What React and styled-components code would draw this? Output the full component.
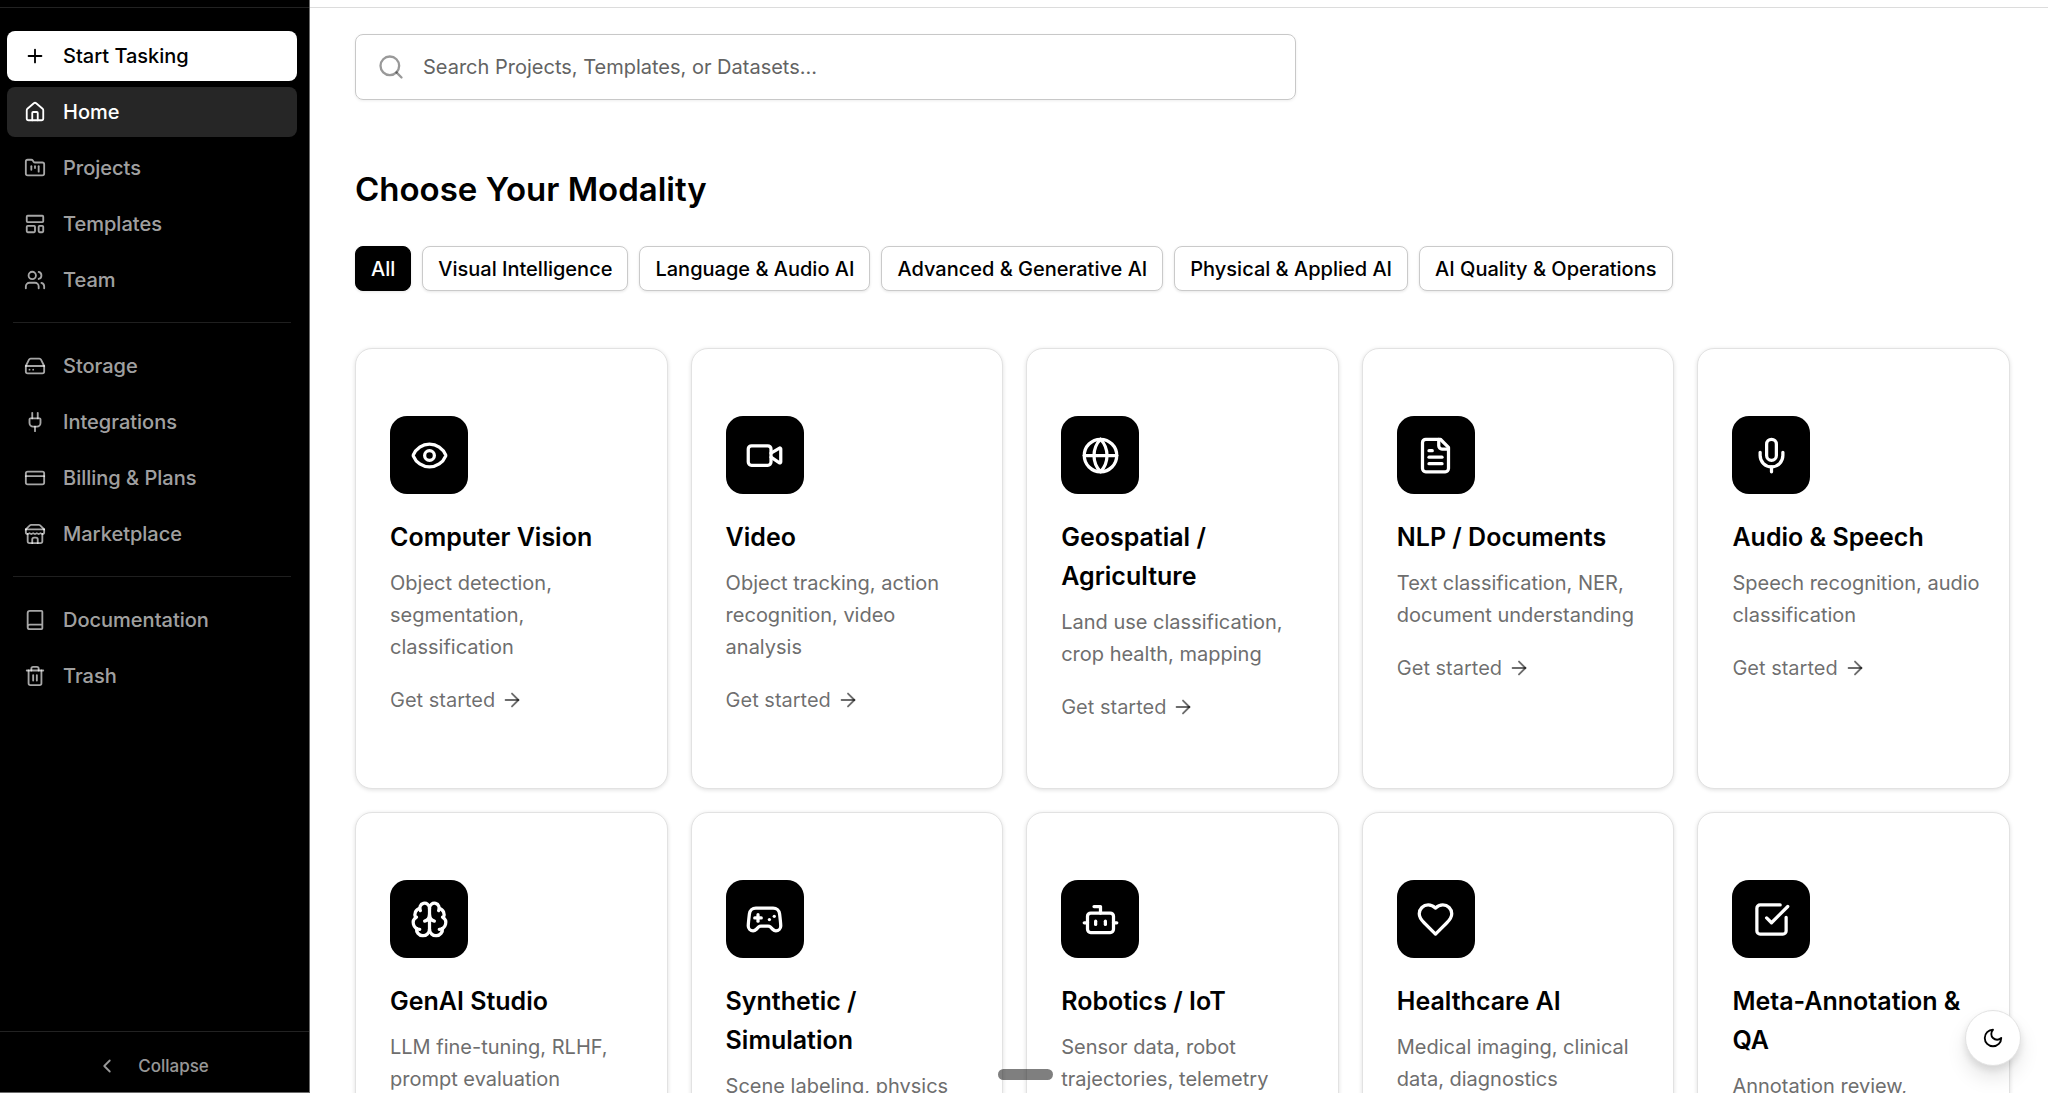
import React, { useState } from "react";
import styled, { createGlobalStyle } from "styled-components";
import {
  ArrowRight, Book, Bot, Brain, ChevronLeft, CreditCard, Eye, FolderKanban, Gamepad2, Globe,
  HardDrive, House, LayoutTemplate, Mic, Plug, Plus, Search, SquareCheckBig, Trash2, Users, Video,
} from "lucide-react";

const GlobalStyle = createGlobalStyle`
  *, *::before, *::after { box-sizing: border-box; }
  body {
    margin: 0;
    background: #fff;
    color: #000;
    font-family: Inter, "Liberation Sans", sans-serif;
    font-size: 20px;
    -webkit-font-smoothing: antialiased;
  }
  h1, h2, p { margin: 0; }
  a { color: inherit; text-decoration: none; }
  button, input { font: inherit; }
`;

const StrokeIcon = styled.svg.attrs({
  viewBox: "0 0 24 24",
  fill: "none",
  stroke: "currentColor",
  strokeWidth: 2,
  strokeLinecap: "round",
  strokeLinejoin: "round",
  "aria-hidden": true,
})`
  flex: none;
`;

const FileIcon = ({ size }) => (
  <StrokeIcon width={size} height={size}>
    <path d="M15 2H6a2 2 0 0 0-2 2v16a2 2 0 0 0 2 2h12a2 2 0 0 0 2-2V7Z" />
    <path d="M14 2v4a2 2 0 0 0 2 2h4" />
    <path d="M10 9H8" />
    <path d="M16 13H8" />
    <path d="M16 17H8" />
  </StrokeIcon>
);

const HeartIcon = ({ size }) => (
  <StrokeIcon width={size} height={size}>
    <path d="M19 14c1.49-1.46 3-3.21 3-5.5A5.5 5.5 0 0 0 16.5 3c-1.76 0-3 .5-4.5 2-1.5-1.5-2.74-2-4.5-2A5.5 5.5 0 0 0 2 8.5c0 2.3 1.5 4.05 3 5.5l7 7Z" />
  </StrokeIcon>
);

const MoonIcon = ({ size }) => (
  <StrokeIcon width={size} height={size}>
    <path d="M12 3a6 6 0 0 0 9 9 9 9 0 1 1-9-9Z" />
  </StrokeIcon>
);

const StoreIcon = ({ size }) => (
  <StrokeIcon width={size} height={size}>
    <path d="m2 7 4.41-4.41A2 2 0 0 1 7.83 2h8.34a2 2 0 0 1 1.42.59L22 7" />
    <path d="M4 12v8a2 2 0 0 0 2 2h12a2 2 0 0 0 2-2v-8" />
    <path d="M15 22v-4a2 2 0 0 0-2-2h-2a2 2 0 0 0-2 2v4" />
    <path d="M2 7h20" />
    <path d="M22 7v3a2 2 0 0 1-2 2a2.7 2.7 0 0 1-1.59-.63.7.7 0 0 0-.82 0A2.7 2.7 0 0 1 16 12a2.7 2.7 0 0 1-1.59-.63.7.7 0 0 0-.82 0A2.7 2.7 0 0 1 12 12a2.7 2.7 0 0 1-1.59-.63.7.7 0 0 0-.82 0A2.7 2.7 0 0 1 8 12a2.7 2.7 0 0 1-1.59-.63.7.7 0 0 0-.82 0A2.7 2.7 0 0 1 4 12a2 2 0 0 1-2-2V7" />
  </StrokeIcon>
);

const Page = styled.div`
  display: flex;
  height: 100vh;
  overflow: hidden;
`;

const Sidebar = styled.aside`
  display: flex;
  flex: none;
  flex-direction: column;
  width: 310px;
  background: #000;
  color: #fff;
  border-right: 1px solid #6b6b6b;
  border-bottom: 1px solid #6b6b6b;
`;

const TopEdge = styled.div`
  flex: none;
  height: 8px;
  border-bottom: 1px solid ${(p) => (p.$dark ? "#222" : "#dcdcdc")};
`;

const Nav = styled.nav`
  flex: 1;
  min-height: 0;
  padding: 23px 12px 0 7px;
`;

const NavList = styled.ul`
  display: flex;
  flex-direction: column;
  gap: 6px;
  margin: 0;
  padding: 0;
  list-style: none;
`;

const Divider = styled.hr`
  height: 1px;
  margin: 17px 6px 18px;
  border: 0;
  background: #1f1f1f;
`;

const navColors = {
  primary: { bg: "#fff", fg: "#000" },
  active: { bg: "#262626", fg: "#fff" },
  plain: { bg: "transparent", fg: "rgba(255, 255, 255, 0.65)" },
};

const NavLink = styled.a`
  display: flex;
  align-items: center;
  gap: 17px;
  height: 50px;
  padding: 0 17px;
  border-radius: 8px;
  font-weight: 500;
  line-height: 28px;
  background: ${(p) => navColors[p.$variant].bg};
  color: ${(p) => navColors[p.$variant].fg};
`;

const SidebarFooter = styled.div`
  display: flex;
  justify-content: center;
  padding: 12px 16px 4px 12px;
  border-top: 1px solid #222;
`;

const CollapseButton = styled.button`
  display: flex;
  align-items: center;
  gap: 20px;
  height: 44px;
  padding: 0;
  border: 0;
  background: none;
  color: rgba(255, 255, 255, 0.6);
  font-size: 17px;
  font-weight: 500;
`;

const Main = styled.main`
  display: flex;
  flex: 1;
  flex-direction: column;
  min-width: 0;
`;

const Content = styled.div`
  flex: 1;
  min-height: 0;
  padding: 26px 38px 45px 45px;
  overflow-y: auto;
  scrollbar-width: none;
`;

const SearchBox = styled.label`
  display: flex;
  align-items: center;
  gap: 18px;
  max-width: 941px;
  height: 66px;
  padding: 0 21px;
  border: 1px solid #c8c8c8;
  border-radius: 8px;
  box-shadow: 0 1px 3px rgba(0, 0, 0, 0.07);
  color: rgba(0, 0, 0, 0.4);
`;

const SearchInput = styled.input`
  flex: 1;
  min-width: 0;
  padding: 0;
  border: 0;
  outline: 0;
  background: none;
  color: #000;

  &::placeholder {
    color: #636363;
    opacity: 1;
  }
`;

const Heading = styled.h1`
  margin-top: 67px;
  font-size: 33px;
  font-weight: 600;
  line-height: 45px;
`;

const Filters = styled.div`
  display: flex;
  flex-wrap: wrap;
  gap: 11px;
  margin: 34px 0 57px;
`;

const FilterButton = styled.button`
  height: 45px;
  padding: 0 15px;
  border: 1px solid ${(p) => (p.$selected ? "#000" : "#cacaca")};
  border-radius: 8px;
  box-shadow: 0 1px 3px rgba(0, 0, 0, 0.1);
  background: ${(p) => (p.$selected ? "#000" : "#fff")};
  color: ${(p) => (p.$selected ? "#fff" : "#000")};
  font-weight: 500;
`;

const CardGrid = styled.div`
  display: grid;
  grid-template-columns: repeat(5, minmax(0, 1fr));
  gap: 23px;
`;

const Card = styled.article`
  padding: 67px 29px 67px 34px;
  border: 1px solid #e2e2e2;
  border-radius: 17px;
  box-shadow: 0 1px 4px rgba(0, 0, 0, 0.13);
  background: #fff;
`;

const IconTile = styled.div`
  display: grid;
  place-items: center;
  width: 78px;
  height: 78px;
  margin-bottom: 24px;
  border-radius: 17px;
  background: #000;
  color: #fff;
`;

const CardTitle = styled.h2`
  margin-bottom: 10px;
  font-size: 25px;
  font-weight: 600;
  line-height: 39px;
`;

const CardText = styled.p`
  margin-bottom: 23px;
  color: #6e6e6e;
  line-height: 32px;
`;

const CardLink = styled.a`
  display: inline-flex;
  align-items: center;
  gap: 6px;
  color: rgba(0, 0, 0, 0.58);
  line-height: 28px;
  vertical-align: top;
`;

const ThemeButton = styled.button`
  position: fixed;
  right: 27px;
  bottom: 27px;
  display: grid;
  place-items: center;
  width: 56px;
  height: 56px;
  padding: 0;
  border: 1px solid #e2e2e2;
  border-radius: 50%;
  box-shadow: 0 12px 20px rgba(0, 0, 0, 0.1), 0 4px 8px rgba(0, 0, 0, 0.1);
  background: #fff;
  color: #000;
`;

const DragHandle = styled.div`
  position: fixed;
  bottom: 13px;
  left: 50%;
  width: 55px;
  height: 11px;
  margin-left: -26px;
  border-radius: 6px;
  background: rgba(0, 0, 0, 0.5);
`;

const navGroups = [
  [
    { label: "Start Tasking", icon: Plus, variant: "primary" },
    { label: "Home", icon: House, variant: "active" },
    { label: "Projects", icon: FolderKanban },
    { label: "Templates", icon: LayoutTemplate },
    { label: "Team", icon: Users },
  ],
  [
    { label: "Storage", icon: HardDrive },
    { label: "Integrations", icon: Plug },
    { label: "Billing & Plans", icon: CreditCard },
    { label: "Marketplace", icon: StoreIcon },
  ],
  [
    { label: "Documentation", icon: Book },
    { label: "Trash", icon: Trash2 },
  ],
];

const filters = [
  "All",
  "Visual Intelligence",
  "Language & Audio AI",
  "Advanced & Generative AI",
  "Physical & Applied AI",
  "AI Quality & Operations",
];

const cards = [
  { title: "Computer Vision", text: "Object detection, segmentation, classification", icon: Eye },
  { title: "Video", text: "Object tracking, action recognition, video analysis", icon: Video },
  { title: "Geospatial / Agriculture", text: "Land use classification, crop health, mapping", icon: Globe },
  { title: "NLP / Documents", text: "Text classification, NER, document understanding", icon: FileIcon },
  { title: "Audio & Speech", text: "Speech recognition, audio classification", icon: Mic },
  { title: "GenAI Studio", text: "LLM fine-tuning, RLHF, prompt evaluation", icon: Brain },
  { title: "Synthetic / Simulation", text: "Scene labeling, physics", icon: Gamepad2 },
  { title: "Robotics / IoT", text: "Sensor data, robot trajectories, telemetry", icon: Bot },
  { title: "Healthcare AI", text: "Medical imaging, clinical data, diagnostics", icon: HeartIcon },
  { title: "Meta-Annotation & QA", text: "Annotation review,", icon: SquareCheckBig },
];

export default function App() {
  const [filter, setFilter] = useState("All");

  return (
    <>
      <GlobalStyle />
      <Page>
        <Sidebar>
          <TopEdge $dark />
          <Nav>
            {navGroups.map((group, index) => (
              <React.Fragment key={group[0].label}>
                {index > 0 && <Divider />}
                <NavList>
                  {group.map(({ label, icon: Icon, variant = "plain" }) => (
                    <li key={label}>
                      <NavLink href="#" $variant={variant}>
                        <Icon size={22} />
                        {label}
                      </NavLink>
                    </li>
                  ))}
                </NavList>
              </React.Fragment>
            ))}
          </Nav>
          <SidebarFooter>
            <CollapseButton type="button">
              <ChevronLeft size={22} />
              Collapse
            </CollapseButton>
          </SidebarFooter>
        </Sidebar>
        <Main>
          <TopEdge />
          <Content>
            <SearchBox>
              <Search size={28} />
              <SearchInput
                type="text"
                aria-label="Search"
                placeholder="Search Projects, Templates, or Datasets..."
              />
            </SearchBox>
            <Heading>Choose Your Modality</Heading>
            <Filters>
              {filters.map((name) => (
                <FilterButton
                  key={name}
                  type="button"
                  $selected={name === filter}
                  onClick={() => setFilter(name)}
                >
                  {name}
                </FilterButton>
              ))}
            </Filters>
            <CardGrid>
              {cards.map(({ title, text, icon: Icon }) => (
                <Card key={title}>
                  <IconTile>
                    <Icon size={39} />
                  </IconTile>
                  <CardTitle>{title}</CardTitle>
                  <CardText>{text}</CardText>
                  <CardLink href="#">
                    Get started
                    <ArrowRight size={22} />
                  </CardLink>
                </Card>
              ))}
            </CardGrid>
          </Content>
        </Main>
      </Page>
      <DragHandle />
      <ThemeButton type="button" aria-label="Toggle theme">
        <MoonIcon size={22} />
      </ThemeButton>
    </>
  );
}
